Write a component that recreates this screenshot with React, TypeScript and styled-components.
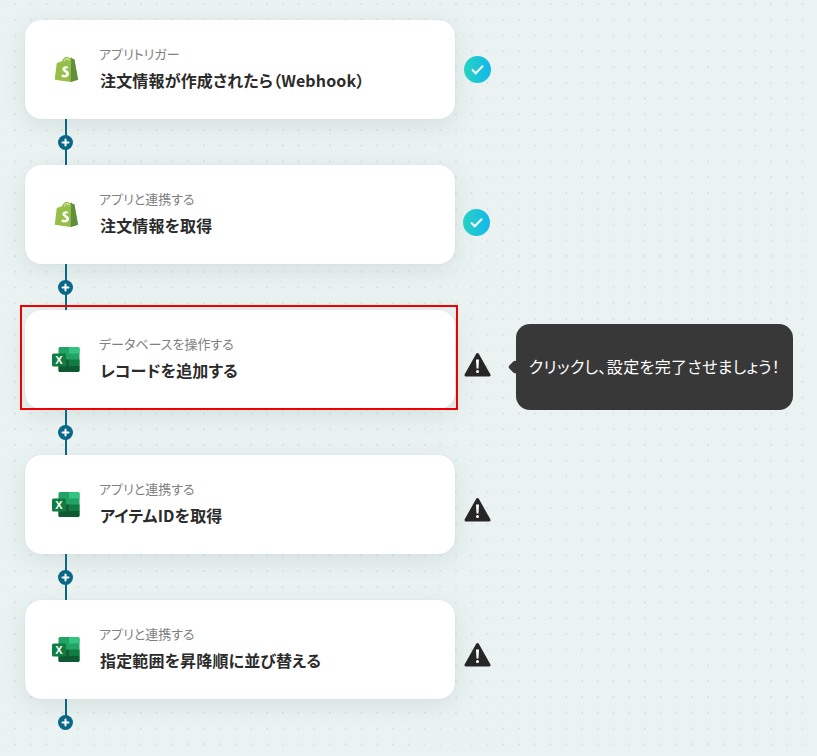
import styled, { createGlobalStyle } from "styled-components";

const GlobalStyle = createGlobalStyle`
  html, body {
    margin: 0;
    padding: 0;
    height: 100%;
    overflow: hidden;
    background-color: #eaf3f2;
    background-image: radial-gradient(circle, #dae4e4 1px, transparent 1.2px);
    background-size: 15.75px 15.75px;
    background-position: 7.1px -3.9px;
    font-family: "Noto Sans CJK JP", "Noto Sans", sans-serif;
  }
`;

const Flow = styled.div`
  display: flex;
  flex-direction: column;
  padding: 20px 0 0 25px;
  width: 792px;
  box-sizing: border-box;
`;

const Step = styled.div`
  position: relative;
  display: flex;
  align-items: flex-start;
  gap: 9px;
`;

const Card = styled.div`
  display: flex;
  align-items: center;
  width: 430px;
  height: 99px;
  padding-left: 26px;
  gap: 19px;
  box-sizing: border-box;
  background: #fff;
  border-radius: 16px;
  box-shadow: 0 6px 24px rgba(60, 90, 90, 0.12), 0 0 1px rgba(60, 90, 90, 0.18);
`;

const Selection = styled.div`
  position: absolute;
  left: -5px;
  top: -5px;
  width: 438px;
  height: 105px;
  box-sizing: border-box;
  border: 2px solid #f00000;
  pointer-events: none;
`;

const Logo = styled.div`
  flex: none;
  width: 30px;
  height: 30px;
  display: flex;
  align-items: center;
  justify-content: center;
`;

const Labels = styled.div`
  display: flex;
  flex-direction: column;
  gap: 7px;
  margin-bottom: 3px;
  font-feature-settings: "palt";
`;

const Kind = styled.div`
  font-size: 13px;
  line-height: 17px;
  margin-left: -1px;
  color: #808080;
`;

const Title = styled.div`
  font-size: 16px;
  line-height: 23px;
  font-weight: 700;
  color: #2b2b2b;
  letter-spacing: 0.15px;
`;

const Status = styled.div<{ $offset: number; $nudge?: number }>`
  flex: none;
  display: flex;
  width: 27px;
  height: 27px;
  margin-top: ${(p) => p.$offset}px;
  margin-left: ${(p) => p.$nudge ?? 0}px;
`;

const Connector = styled.div<{ $last: boolean }>`
  position: relative;
  display: flex;
  align-items: center;
  width: 2px;
  height: ${(p) => (p.$last ? 24 : 46)}px;
  margin-left: 40px;
  background: #0b6787;
`;

const AddButton = styled.div`
  position: absolute;
  left: -7px;
  top: 16px;
  width: 15px;
  height: 15px;
  border-radius: 50%;
  background: #0b6787;
  display: flex;
  align-items: center;
  justify-content: center;
`;

const Tooltip = styled.div`
  position: absolute;
  left: 491px;
  top: 14px;
  width: 277px;
  height: 86px;
  padding-bottom: 3px;
  box-sizing: border-box;
  background: #383838;
  border-radius: 14px;
  color: #fff;
  font-size: 16px;
  font-weight: 400;
  font-feature-settings: "palt";
  letter-spacing: 0.35px;
  display: flex;
  align-items: center;
  justify-content: center;

  &::before {
    content: "";
    position: absolute;
    left: -6px;
    top: 38px;
    width: 10px;
    height: 10px;
    background: #383838;
    border-radius: 2px;
    transform: rotate(45deg);
  }
`;

const ShopifyLogo = () => (
  <svg width="25" height="28" viewBox="0 0 27 30">
    <path d="M3 7.5 8.5 5.5C10 2 12.5.6 14.5.8c1 .1 1.5.6 1.9 1.3l2.2-.5 1.6 1.6 1.8.2L26 25.5 18 28 .8 25.5Z" fill="#95bf47" />
    <path d="M18.6 1.6 20.2 3.2l1.8.2L26 25.5 18 28Z" fill="#5e8e3e" />
    <path d="M11 5.8c.4-1.7 1.5-3 2.8-3.4M14.8 4.8c0-1 0-1.8-.4-2.4M16.5 4.3c-.1-.8-.3-1.3-.6-1.7" stroke="#fff" strokeWidth="1" fill="none" opacity="0.85" />
    <path d="M15 11.5c-3-1.2-6 .2-6 2.8 0 2.8 4 3 4 5 0 1.3-2 1.6-4.3.3l-.8 2.8c3.8 1.6 8.3.6 8.3-3.5 0-3.2-4-3.4-4-5 0-.9 1.2-1.2 3.3-.5Z" fill="#fff" />
  </svg>
);

const ExcelLogo = () => (
  <svg width="28" height="27" viewBox="0 0 28 27">
    <rect x="6.5" y="1" width="21" height="25" rx="1.5" fill="#21a366" />
    <path d="M17 1h9c.8 0 1.5.7 1.5 1.5V7.5H17Z" fill="#33c481" />
    <rect x="17" y="13.5" width="10.5" height="6.5" fill="#107c41" />
    <path d="M6.5 13.5H17V20H6.5Z" fill="#185c37" />
    <path d="M6.5 20h21v4.5c0 .8-.7 1.5-1.5 1.5H8c-.8 0-1.5-.7-1.5-1.5Z" fill="#0f5a32" />
    <rect x="0" y="7.5" width="14" height="13" rx="1.5" fill="#107c41" />
    <text x="7" y="18" fontSize="11" fontWeight="700" fill="#fff" textAnchor="middle" fontFamily="Liberation Sans, sans-serif">X</text>
  </svg>
);

const DoneIcon = () => (
  <svg width="27" height="27" viewBox="0 0 27 27">
    <defs>
      <linearGradient id="done" x1="0" y1="0.5" x2="1" y2="0.5">
        <stop offset="0" stopColor="#26d3c0" />
        <stop offset="1" stopColor="#14b7ee" />
      </linearGradient>
    </defs>
    <circle cx="13.5" cy="13.5" r="13.5" fill="url(#done)" />
    <path d="M8 13.5 11.7 17.3 19 9.7" fill="none" stroke="#fff" strokeWidth="2" />
  </svg>
);

const WarnIcon = () => (
  <svg width="27" height="27" viewBox="0 0 27 27">
    <path d="M13.5 3.5 25 24H2Z" fill="#262626" stroke="#262626" strokeWidth="3" strokeLinejoin="round" />
    <path d="M12 8.5h3l-.5 9h-2Z" fill="#fff" />
    <circle cx="13.5" cy="20.5" r="1.5" fill="#fff" />
  </svg>
);

const PlusIcon = () => (
  <svg width="9" height="9" viewBox="0 0 9 9">
    <path d="M4.5 1.5v6M1.5 4.5h6" stroke="#fff" strokeWidth="2" strokeLinecap="round" />
  </svg>
);

const steps = [
  { logo: "shopify", kind: "アプリトリガー", title: "注文情報が作成されたら（Webhook）", done: true, offset: 36 },
  { logo: "shopify", kind: "アプリと連携する", title: "注文情報を取得", done: true, offset: 44, nudge: -1 },
  { logo: "excel", kind: "データベースを操作する", title: "レコードを追加する", done: false, offset: 41, active: true },
  { logo: "excel", kind: "アプリと連携する", title: "アイテムIDを取得", done: false, offset: 41 },
  { logo: "excel", kind: "アプリと連携する", title: "指定範囲を昇降順に並び替える", done: false, offset: 41 },
];

export default function App() {
  return (
    <>
      <GlobalStyle />
      <Flow>
        {steps.map((s, i) => (
          <div key={s.kind + s.title}>
            <Step>
              <Card>
                <Logo>{s.logo === "shopify" ? <ShopifyLogo /> : <ExcelLogo />}</Logo>
                <Labels>
                  <Kind>{s.kind}</Kind>
                  <Title>{s.title}</Title>
                </Labels>
              </Card>
              <Status $offset={s.offset} $nudge={s.nudge}>{s.done ? <DoneIcon /> : <WarnIcon />}</Status>
              {s.active && <Selection />}
              {s.active && <Tooltip>クリックし、設定を完了させましょう！</Tooltip>}
            </Step>
            <Connector $last={i === steps.length - 1}>
              <AddButton>
                <PlusIcon />
              </AddButton>
            </Connector>
          </div>
        ))}
      </Flow>
    </>
  );
}
